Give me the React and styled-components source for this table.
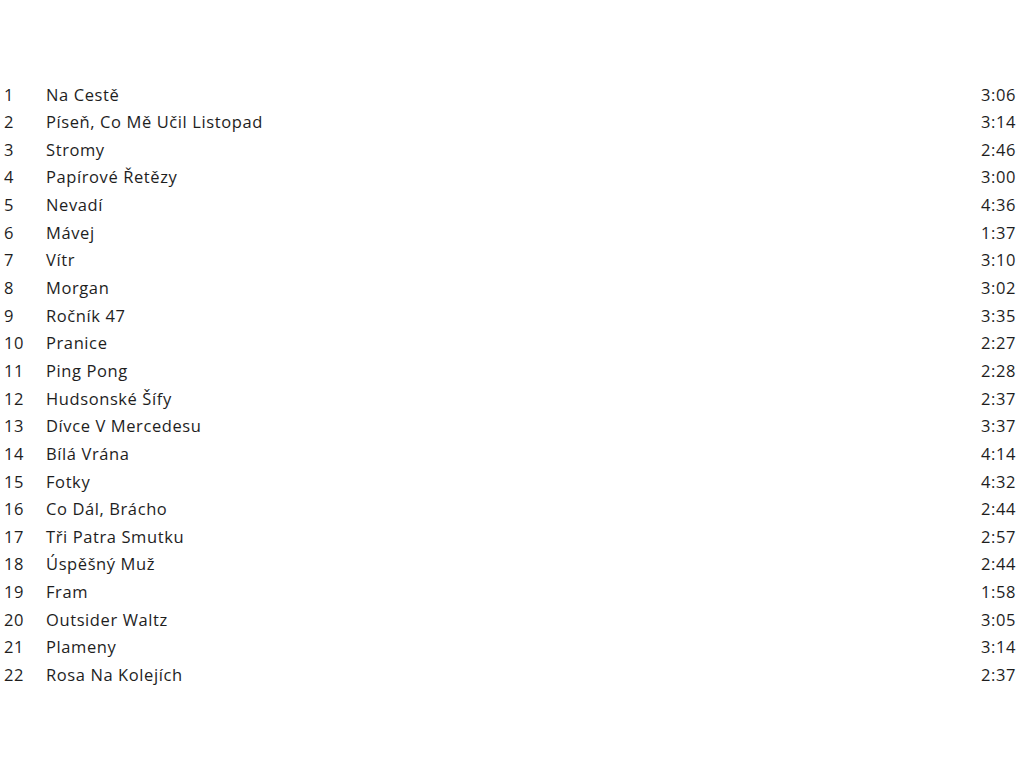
import React from 'react';
import styled, { createGlobalStyle } from 'styled-components';

const GlobalStyle = createGlobalStyle`
  body {
    margin: 0;
    background: #ffffff;
    font-family: "Open Sans", "Noto Sans", sans-serif;
    color: #1e1e1e;
  }
`;

const TrackList = styled.ol`
  list-style: none;
  margin: 0;
  padding: 81px 8px 0 4px;
`;

const TrackRow = styled.li`
  display: grid;
  grid-template-columns: 42px 1fr auto;
  align-items: center;
  height: 27.65px;
  font-size: 16.5px;
  font-weight: 500;
  letter-spacing: 0.6px;
  line-height: 1;
`;

const Cell = styled.span`
  text-align: ${(p) => (p.$right ? 'right' : 'left')};
  white-space: nowrap;
`;

const tracks = [
  ['Na Cestě', '3:06'],
  ['Píseň, Co Mě Učil Listopad', '3:14'],
  ['Stromy', '2:46'],
  ['Papírové Řetězy', '3:00'],
  ['Nevadí', '4:36'],
  ['Mávej', '1:37'],
  ['Vítr', '3:10'],
  ['Morgan', '3:02'],
  ['Ročník 47', '3:35'],
  ['Pranice', '2:27'],
  ['Ping Pong', '2:28'],
  ['Hudsonské Šífy', '2:37'],
  ['Dívce V Mercedesu', '3:37'],
  ['Bílá Vrána', '4:14'],
  ['Fotky', '4:32'],
  ['Co Dál, Brácho', '2:44'],
  ['Tři Patra Smutku', '2:57'],
  ['Úspěšný Muž', '2:44'],
  ['Fram', '1:58'],
  ['Outsider Waltz', '3:05'],
  ['Plameny', '3:14'],
  ['Rosa Na Kolejích', '2:37'],
];

export default function App() {
  return (
    <>
      <GlobalStyle />
      <TrackList>
        {tracks.map(([title, time], i) => (
          <TrackRow key={title}>
            <Cell>{i + 1}</Cell>
            <Cell>{title}</Cell>
            <Cell $right>{time}</Cell>
          </TrackRow>
        ))}
      </TrackList>
    </>
  );
}
